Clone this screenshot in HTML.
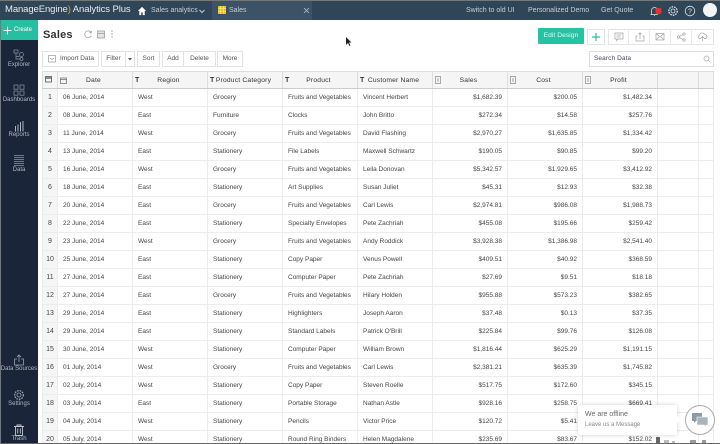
<!DOCTYPE html>
<html><head><meta charset="utf-8"><style>
*{box-sizing:border-box}
html,body{margin:0;padding:0;width:720px;height:444px;overflow:hidden;background:#fff;font-family:"Liberation Sans",sans-serif;color:#333}
#w{position:absolute;left:0;top:0;width:720px;height:444px;overflow:hidden;filter:blur(.25px)}
.a{position:absolute;white-space:nowrap}
#top{position:absolute;left:0;top:0;width:720px;height:20px;background:#2f4659;border-top:1px solid #777}
#side{position:absolute;left:1px;top:20px;width:37px;height:424px;background:#1b2539}
.nav{position:absolute;left:0;width:38px;text-align:center;font-size:6px;color:#aeb6c2}
.btn{position:absolute;top:51px;height:16px;border:1px solid #e2e2e2;background:#fff;font-size:6.5px;line-height:14px;text-align:center;color:#555}
.tt{position:absolute;top:6px;font-size:7px;color:#c5ced6;white-space:nowrap}
table{position:absolute;left:42px;top:71px;border-collapse:collapse;table-layout:fixed;width:672px;font-size:6.5px;color:#444}
th,td{border:1px solid #ececec;height:18px;padding:0 5px;white-space:nowrap;overflow:hidden;font-weight:normal}
th{height:17px;background:#f5f5f5;border-color:#ddd;border-bottom:1px solid #ccc;color:#333;text-align:center;position:relative;padding:0 6px 0 3px;letter-spacing:.2px;font-size:6.7px}
td:first-child{background:#f5f5f5;text-align:center;padding:0;font-size:7px}
td.r{text-align:right}
th .t{position:absolute;left:2px;top:5px;font-size:7px;font-weight:bold}
th svg{position:absolute;left:2px;top:4px}
.ic{position:absolute;top:29px;height:16px;border:1px solid #e4e4e4;background:#fff}
.dv{position:absolute;top:29px;width:1px;height:16px;background:#e8e8e8}
</style></head><body><div id="w">
<div id="top">
<div class="a" style="left:212px;top:0;width:100px;height:19px;background:#3c5266"></div>
<div class="a" style="left:5px;top:3px;font-size:9.5px;color:#e6eaee;letter-spacing:-.1px;line-height:11px">ManageEngine<span style="color:#d9a441">)</span> Analytics Plus</div>
<svg class="a" style="left:137px;top:5px" width="10" height="10" viewBox="0 0 11 11"><path d="M5.5 1L1 5.500h1.500V10h2.200V7h1.600v3h2.200V5.500H10z" fill="#fff"/></svg>
<div class="tt" style="left:151px">Sales analytics</div>
<svg class="a" style="left:199px;top:8px" width="6" height="5"><path d="M.5 1l2.500 2.500L5.500 1" stroke="#c5ced6" fill="none"/></svg>
<svg class="a" style="left:218px;top:5px" width="8" height="8"><rect width="8" height="8" fill="#f0bd22"/><path d="M2.700 0v8M5.300 0v8M0 2.700h8M0 5.300h8" stroke="#fff2c0" stroke-width=".5"/></svg>
<div class="tt" style="left:229px">Sales</div>
<svg class="a" style="left:303px;top:6px" width="7" height="7"><path d="M1 1l5 5M6 1L1 6" stroke="#b8c2cb" fill="none" stroke-width=".8"/></svg>
<div class="tt" style="left:466px">Switch to old UI</div>
<div class="tt" style="left:528px">Personalized Demo</div>
<div class="tt" style="left:601px">Get Quote</div>
<svg class="a" style="left:649px;top:4px" width="14" height="12"><path d="M1.500 9.500h7M2.500 9.500V5.500a3 3 0 0 1 6 0v4M5 10.500h1" stroke="#dfe4e8" fill="none" stroke-width=".8"/><rect x="6.500" y="3" width="6" height="6" rx="2" fill="#e5322d"/></svg>
<svg class="a" style="left:667px;top:4px" width="12" height="12"><circle cx="6" cy="6" r="2" stroke="#dfe4e8" fill="none" stroke-width=".8"/><circle cx="6" cy="6" r="4.200" stroke="#dfe4e8" fill="none" stroke-width="1.300" stroke-dasharray="1.600 1"/></svg>
<svg class="a" style="left:684px;top:4px" width="12" height="12"><circle cx="6" cy="6" r="4.800" stroke="#dfe4e8" fill="none" stroke-width=".8"/><text x="6" y="8.500" font-size="7" fill="#dfe4e8" text-anchor="middle" font-family="Liberation Sans">?</text></svg>
<div class="a" style="left:703px;top:2px;width:14px;height:14px;border-radius:50%;background:#f2f4f6"></div>
</div>

<div class="a" style="left:0;top:20px;width:1px;height:424px;background:#777"></div>
<div id="side"></div>
<div class="a" style="left:1px;top:20px;width:37px;height:20px;background:#26bfa2;color:#fff;font-size:6px;line-height:20px;padding-left:13px">Create</div>
<svg class="a" style="left:3px;top:26px" width="9" height="9"><path d="M4.500 .5v8M.5 4.500h8" stroke="#fff"/></svg>

<svg class="a" style="left:13px;top:49px" width="12" height="12" fill="none" stroke="#8c95a5" stroke-width=".7"><rect x="1" y="1" width="4" height="3"/><circle cx="8.500" cy="5.500" r="2"/><circle cx="8.500" cy="10" r="1.500"/><path d="M3 4v3.500h3.500M3 7.500V10h4"/></svg>
<div class="nav" style="top:61px;margin-top:1px">Explorer</div>
<svg class="a" style="left:13px;top:84px" width="12" height="12" fill="none" stroke="#8c95a5" stroke-width=".7"><rect x="1" y="1" width="4" height="4.200"/><rect x="7" y="1" width="4" height="4.200"/><rect x="1" y="7" width="4" height="4.200"/><rect x="7" y="7" width="4" height="4.200"/></svg>
<div class="nav" style="top:97px">Dashboards</div>
<svg class="a" style="left:13px;top:120px" width="12" height="12" stroke="#aeb6c2" stroke-width="1"><path d="M2.500 11.500V6M5 11.500V4.500M7.500 11.500V2M10 11.500V1"/></svg>
<div class="nav" style="top:132px">Reports</div>
<svg class="a" style="left:13px;top:154px" width="12" height="12" stroke="#8c95a5" stroke-width=".8" fill="none"><path d="M1 1.500h10M1 3.500h10M1 5.500h10M1 7.500h10M1 9.500h10M1 11.500h10"/></svg>
<div class="nav" style="top:167px">Data</div>
<svg class="a" style="left:13px;top:354px" width="12" height="12" stroke="#9aa3b1" stroke-width=".8" fill="none"><path d="M1.500 5v6h9V5H8M4 5H1.500M6 8V1M4 3l2-2 2 2"/></svg>
<div class="nav" style="top:366px">Data Sources</div>
<svg class="a" style="left:13px;top:389px" width="12" height="12"><circle cx="6" cy="6" r="2" stroke="#9aa3b1" fill="none" stroke-width=".8"/><circle cx="6" cy="6" r="4.300" stroke="#9aa3b1" fill="none" stroke-width="1.300" stroke-dasharray="1.600 1"/></svg>
<div class="nav" style="top:401px">Settings</div>
<svg class="a" style="left:13px;top:424px" width="12" height="12" stroke="#c0c6d0" stroke-width=".9" fill="none"><path d="M1 2.500h10M4 2.500V1h4v1.500M2.500 2.500v9h7v-9M4.700 4.500v5M7.300 4.500v5"/></svg>
<div class="nav" style="top:436px">Trash</div>

<div class="a" style="left:43px;top:29px;font-size:11px;font-weight:bold;color:#333;letter-spacing:.2px">Sales</div>
<svg class="a" style="left:82px;top:29px" width="36" height="11" fill="none" stroke="#a0a0a0" stroke-width=".8"><path d="M9 3.500A3.400 3.400 0 1 0 9.300 6.500M9.300 1.800v2H7.300"/><rect x="15.500" y="2" width="7" height="7" fill="#e4e4e4"/><path d="M15.500 4.500h7"/><circle cx="30" cy="2" r=".6" fill="#777" stroke="none"/><circle cx="30" cy="5" r=".6" fill="#777" stroke="none"/><circle cx="30" cy="8" r=".6" fill="#777" stroke="none"/></svg>
<svg class="a" style="left:345px;top:37px" width="7" height="10"><path d="M1 0v8l2-2 1.500 3 1-.5L4 5.500h2.500z" fill="#222"/></svg>

<div class="btn" style="left:42px;width:57px;text-align:left;padding-left:17px">Import Data</div>
<svg class="a" style="left:48px;top:55px" width="8" height="8" fill="none" stroke="#999" stroke-width=".7"><rect x=".5" y=".5" width="7" height="6.500"/><path d="M2 3l2 1.500L6 3"/></svg>
<div class="btn" style="left:101px;width:25px">Filter</div>
<div class="btn" style="left:126px;width:9px;border-left:0"></div>
<svg class="a" style="left:128px;top:58px" width="5" height="3"><path d="M0 0h4L2 2.500z" fill="#555"/></svg>
<div class="btn" style="left:137px;width:23px">Sort</div>
<div class="btn" style="left:162px;width:22px">Add</div>
<div class="btn" style="left:184px;width:32px;border-left:0">Delete</div>
<div class="btn" style="left:217px;width:26px">More</div>

<div class="a" style="left:538px;top:28px;width:46px;height:16px;background:#25c3a3;border-radius:1px;color:#dff7f1;font-size:6.800px;line-height:16px;text-align:center">Edit Design</div>
<div class="ic" style="left:587px;width:18px"></div>
<svg class="a" style="left:591px;top:32px" width="10" height="10"><path d="M5 1v8M1 5h8" stroke="#29bfa2" stroke-width="1.200"/></svg>
<div class="ic" style="left:608px;width:106px"></div>
<div class="dv" style="left:628px"></div>
<div class="dv" style="left:649px"></div>
<div class="dv" style="left:670px"></div>
<div class="dv" style="left:691px"></div>
<svg class="a" style="left:613px;top:32px" width="100" height="10" fill="none" stroke="#a2a2a2" stroke-width=".7"><g transform="translate(1 0)"><path d="M1 1h8v6H4L2.500 8.500V7H1zM2.500 3h5M2.500 5h4"/></g><g transform="translate(1.500 0)"><path d="M23 4h-1.500v5h8V4H28M25.500 7V1M23.800 2.500l1.700-1.700 1.700 1.700"/></g><rect x="43" y="1.500" width="8" height="6.500"/><path d="M43 1.500l4 3.500 4-3.500M43 8l3-3M51 8l-3-3"/><g transform="translate(.5 0)"><circle cx="65" cy="5" r="1.200"/><circle cx="70.500" cy="2" r="1.200"/><circle cx="70.500" cy="8" r="1.200"/><path d="M66 4.400l3.500-2M66 5.600l3.500 2"/></g><g transform="translate(2 0)"><path d="M86 6.500h-1.500a2 2 0 0 1 0-3.500 3 3 0 0 1 5.500-.500 2.200 2.200 0 0 1 1 4H89M87.500 9V4.500M86 6l1.500-1.500L89 6"/></g></svg>

<div class="a" style="left:589px;top:51px;width:125px;height:16px;border:1px solid #ddd;font-size:6.500px;line-height:14px;padding-left:4px;color:#444a66;letter-spacing:.1px">Search Data</div>
<svg class="a" style="left:703px;top:55px" width="8" height="8" fill="none" stroke="#aaa" stroke-width=".7"><circle cx="3.500" cy="3.500" r="2.500"/><path d="M5.500 5.500L7.500 7.500"/></svg>

<table>
<colgroup><col style="width:15px"><col style="width:75px"><col style="width:75px"><col style="width:75px"><col style="width:75px"><col style="width:75px"><col style="width:75px"><col style="width:75px"><col style="width:75px"><col style="width:41px"><col></colgroup>
<tr>
<th><svg width="7" height="7" fill="none" stroke="#555" stroke-width=".8"><rect x=".5" y=".5" width="6" height="5.500"/><path d="M.5 2h6" stroke-width="1.300"/></svg></th>
<th><svg width="7" height="7" fill="none" stroke="#666" stroke-width=".7" style="top:5px"><rect x=".5" y="1" width="6" height="5.500"/><path d="M.5 2.500h6"/></svg>Date</th>
<th><span class="t">T</span>Region</th>
<th><span class="t">T</span>Product Category</th>
<th><span class="t">T</span>Product</th>
<th><span class="t">T</span>Customer Name</th>
<th><svg width="6" height="8" fill="none" stroke="#888" stroke-width=".7"><rect x=".5" y=".5" width="5" height="7"/><path d="M2 3h2M2 5h2"/></svg>Sales</th>
<th><svg width="6" height="8" fill="none" stroke="#888" stroke-width=".7"><rect x=".5" y=".5" width="5" height="7"/><path d="M2 3h2M2 5h2"/></svg>Cost</th>
<th><svg width="6" height="8" fill="none" stroke="#888" stroke-width=".7"><rect x=".5" y=".5" width="5" height="7"/><path d="M2 3h2M2 5h2"/></svg>Profit</th>
<th></th><th></th></tr>
<tr><td>1</td><td>06 June, 2014</td><td>West</td><td>Grocery</td><td>Fruits and Vegetables</td><td>Vincent Herbert</td><td class="r">$1,682.39</td><td class="r">$200.05</td><td class="r">$1,482.34</td><td></td><td></td></tr>
<tr><td>2</td><td>08 June, 2014</td><td>East</td><td>Furniture</td><td>Clocks</td><td>John Britto</td><td class="r">$272.34</td><td class="r">$14.58</td><td class="r">$257.76</td><td></td><td></td></tr>
<tr><td>3</td><td>11 June, 2014</td><td>West</td><td>Grocery</td><td>Fruits and Vegetables</td><td>David Flashing</td><td class="r">$2,970.27</td><td class="r">$1,635.85</td><td class="r">$1,334.42</td><td></td><td></td></tr>
<tr><td>4</td><td>13 June, 2014</td><td>East</td><td>Stationery</td><td>File Labels</td><td>Maxwell Schwartz</td><td class="r">$190.05</td><td class="r">$90.85</td><td class="r">$99.20</td><td></td><td></td></tr>
<tr><td>5</td><td>16 June, 2014</td><td>West</td><td>Grocery</td><td>Fruits and Vegetables</td><td>Leila Donovan</td><td class="r">$5,342.57</td><td class="r">$1,929.65</td><td class="r">$3,412.92</td><td></td><td></td></tr>
<tr><td>6</td><td>18 June, 2014</td><td>East</td><td>Stationery</td><td>Art Supplies</td><td>Susan Juliet</td><td class="r">$45.31</td><td class="r">$12.93</td><td class="r">$32.38</td><td></td><td></td></tr>
<tr><td>7</td><td>20 June, 2014</td><td>East</td><td>Grocery</td><td>Fruits and Vegetables</td><td>Carl Lewis</td><td class="r">$2,974.81</td><td class="r">$986.08</td><td class="r">$1,988.73</td><td></td><td></td></tr>
<tr><td>8</td><td>22 June, 2014</td><td>East</td><td>Stationery</td><td>Specialty Envelopes</td><td>Pete Zachriah</td><td class="r">$455.08</td><td class="r">$195.66</td><td class="r">$259.42</td><td></td><td></td></tr>
<tr><td>9</td><td>23 June, 2014</td><td>West</td><td>Grocery</td><td>Fruits and Vegetables</td><td>Andy Roddick</td><td class="r">$3,928.38</td><td class="r">$1,386.98</td><td class="r">$2,541.40</td><td></td><td></td></tr>
<tr><td>10</td><td>25 June, 2014</td><td>East</td><td>Stationery</td><td>Copy Paper</td><td>Venus Powell</td><td class="r">$409.51</td><td class="r">$40.92</td><td class="r">$368.59</td><td></td><td></td></tr>
<tr><td>11</td><td>27 June, 2014</td><td>East</td><td>Stationery</td><td>Computer Paper</td><td>Pete Zachriah</td><td class="r">$27.69</td><td class="r">$9.51</td><td class="r">$18.18</td><td></td><td></td></tr>
<tr><td>12</td><td>27 June, 2014</td><td>East</td><td>Grocery</td><td>Fruits and Vegetables</td><td>Hilary Holden</td><td class="r">$955.88</td><td class="r">$573.23</td><td class="r">$382.65</td><td></td><td></td></tr>
<tr><td>13</td><td>29 June, 2014</td><td>East</td><td>Stationery</td><td>Highlighters</td><td>Joseph Aaron</td><td class="r">$37.48</td><td class="r">$0.13</td><td class="r">$37.35</td><td></td><td></td></tr>
<tr><td>14</td><td>29 June, 2014</td><td>East</td><td>Stationery</td><td>Standard Labels</td><td>Patrick O'Brill</td><td class="r">$225.84</td><td class="r">$99.76</td><td class="r">$126.08</td><td></td><td></td></tr>
<tr><td>15</td><td>30 June, 2014</td><td>West</td><td>Stationery</td><td>Computer Paper</td><td>William Brown</td><td class="r">$1,816.44</td><td class="r">$625.29</td><td class="r">$1,191.15</td><td></td><td></td></tr>
<tr><td>16</td><td>01 July, 2014</td><td>West</td><td>Grocery</td><td>Fruits and Vegetables</td><td>Carl Lewis</td><td class="r">$2,381.21</td><td class="r">$635.39</td><td class="r">$1,745.82</td><td></td><td></td></tr>
<tr><td>17</td><td>02 July, 2014</td><td>West</td><td>Stationery</td><td>Copy Paper</td><td>Steven Roelle</td><td class="r">$517.75</td><td class="r">$172.60</td><td class="r">$345.15</td><td></td><td></td></tr>
<tr><td>18</td><td>03 July, 2014</td><td>East</td><td>Stationery</td><td>Portable Storage</td><td>Nathan Astle</td><td class="r">$928.16</td><td class="r">$258.75</td><td class="r">$669.41</td><td></td><td></td></tr>
<tr><td>19</td><td>04 July, 2014</td><td>West</td><td>Stationery</td><td>Pencils</td><td>Victor Price</td><td class="r">$120.72</td><td class="r">$5.41</td><td class="r">$115.31</td><td></td><td></td></tr>
<tr><td>20</td><td>05 July, 2014</td><td>West</td><td>Stationery</td><td>Round Ring Binders</td><td>Helen Magdalene</td><td class="r">$235.69</td><td class="r">$83.67</td><td class="r">$152.02</td><td></td><td></td></tr>
</table>

<div class="a" style="left:656px;top:437px;width:4px;height:6px;background:#666"></div>
<div class="a" style="left:664px;top:440px;width:5px;height:3px;background:#bbb"></div>
<div class="a" style="left:672px;top:441px;width:3px;height:2px;background:#bbb"></div>
<div class="a" style="left:690px;top:440px;width:6px;height:3px;background:#999"></div>
<div class="a" style="left:702px;top:440px;width:4px;height:3px;background:#999"></div>

<div class="a" style="left:578px;top:405px;width:99px;height:30px;background:#fff;border-radius:2px;box-shadow:0 0 5px rgba(0,0,0,.18)"></div>
<div class="a" style="left:675px;top:417px;width:5px;height:5px;background:#fff;transform:rotate(45deg)"></div>
<div class="a" style="left:585px;top:411px;font-size:7px;color:#666">We are offline</div>
<div class="a" style="left:585px;top:422px;font-size:6px;color:#888">Leave us a Message</div>
<div class="a" style="left:685px;top:405px;width:30px;height:30px;border-radius:50%;background:#fff;border:1px solid #aaa"></div>
<svg class="a" style="left:691px;top:412px" width="18" height="16"><path d="M1 1h10v8H5l-2 2V9H1z" fill="#8f9aa5"/><path d="M6 5h11v8h-2v2l-2-2H6z" fill="#aab4bd" stroke="#fff" stroke-width=".6"/></svg>
<div class="a" style="left:0;top:443px;width:720px;height:1px;background:#666"></div>
</div></body></html>
